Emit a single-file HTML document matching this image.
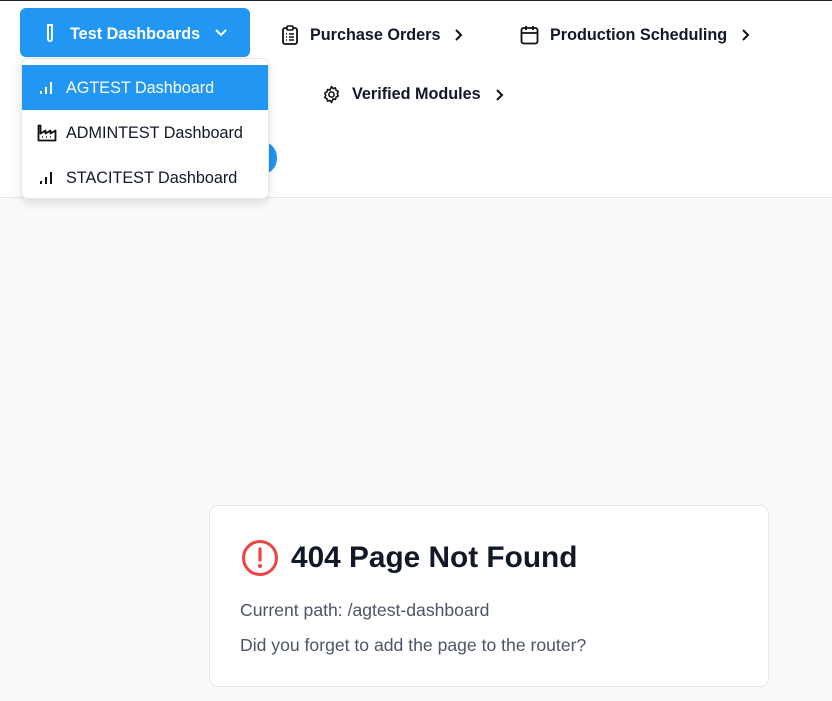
<!DOCTYPE html>
<html><head><meta charset="utf-8"><style>
*{margin:0;padding:0;box-sizing:border-box}
body{width:832px;height:701px;overflow:hidden;background:#f9fafb;font-family:"Liberation Sans",sans-serif;position:relative;color:#111827}
.hdr{position:absolute;left:0;top:0;width:832px;height:198px;background:#fff;border-top:1px solid #222;border-bottom:1px solid #e5e7eb}
.a{position:absolute;white-space:nowrap}
.nav{font-size:16.2px;font-weight:bold;color:#111827;display:flex;align-items:center}
.btn{left:20px;top:8px;width:230px;height:49px;background:#2196f3;border-radius:6px;color:#fff;font-size:16.2px;font-weight:bold;display:flex;align-items:center;padding-left:24px}
.dd{left:21px;top:58px;width:248px;height:141px;background:#fff;border:1px solid #e5e7eb;border-radius:7px;box-shadow:0 4px 10px rgba(0,0,0,.12);overflow:hidden;padding-top:6px}
.it{height:45px;display:flex;align-items:center;padding-left:15px;font-size:16.2px;color:#111827}
.it span{position:relative;top:1px}
.it svg{margin-right:11px}
.it.on{background:#2196f3;color:#fff}
.card{left:209px;top:505px;width:560px;height:182px;background:#fff;border:1px solid #e5e7eb;border-radius:9px}
</style></head><body>
<div class="hdr"></div>
<div class="a" style="left:244px;top:141px;width:33px;height:34px;border-radius:17px;background:#2196f3"></div>
<div class="a btn">
<svg width="12" height="20" viewBox="0 0 12 20" style="margin-right:14px"><path d="M3 2h6M4 2v14a2 2 0 0 0 4 0V2" fill="none" stroke="#fff" stroke-width="2"/></svg>
<span style="position:relative;top:2px">Test Dashboards</span>
<svg width="14" height="10" viewBox="0 0 14 10" style="margin-left:14px"><path d="M2 2l5 5 5-5" fill="none" stroke="#fff" stroke-width="2"/></svg>
</div>
<div class="a nav" style="left:281px;top:25px">
<svg width="18" height="20" viewBox="0 0 18 20" style="margin-right:11px"><rect x="2" y="3" width="14" height="16" rx="2" fill="none" stroke="#111" stroke-width="1.8"/><rect x="6" y="1" width="6" height="4" rx="1" fill="#fff" stroke="#111" stroke-width="1.6"/><path d="M5 9h1M8 9h5M5 12h1M8 12h5M5 15h1M8 15h5" stroke="#111" stroke-width="1.6"/></svg>
Purchase Orders
<svg width="10" height="14" viewBox="0 0 10 14" style="margin-left:14px"><path d="M2 2l5 5-5 5" fill="none" stroke="#111" stroke-width="2"/></svg>
</div>
<div class="a nav" style="left:520px;top:25px">
<svg width="19" height="20" viewBox="0 0 19 20" style="margin-right:11px"><rect x="1.5" y="3" width="16" height="15.5" rx="2" fill="none" stroke="#111" stroke-width="1.8"/><path d="M1.5 8h16M6 1v4M13 1v4" stroke="#111" stroke-width="1.8"/></svg>
Production Scheduling
<svg width="10" height="14" viewBox="0 0 10 14" style="margin-left:14px"><path d="M2 2l5 5-5 5" fill="none" stroke="#111" stroke-width="2"/></svg>
</div>
<div class="a nav" style="left:322px;top:85px">
<svg width="19" height="19" viewBox="0 0 24 24" style="margin-right:11px"><path d="M12 2l2 2.5 3-.8.8 3 2.7 1.5-1.2 2.8 1.2 2.8-2.7 1.5-.8 3-3-.8L12 22l-2-2.5-3 .8-.8-3L3.5 15.8l1.2-2.8-1.2-2.8L6.2 8.7l.8-3 3 .8z" fill="none" stroke="#111" stroke-width="2" stroke-linejoin="round"/><circle cx="12" cy="12" r="3.3" fill="none" stroke="#111" stroke-width="2"/></svg>
Verified Modules
<svg width="10" height="14" viewBox="0 0 10 14" style="margin-left:14px"><path d="M2 2l5 5-5 5" fill="none" stroke="#111" stroke-width="2"/></svg>
</div>
<div class="a dd">
<div class="it on"><svg width="18" height="16" viewBox="0 0 18 16"><path d="M4 14v-3M9 14V7M14 14V2" stroke="#fff" stroke-width="2"/></svg><span>AGTEST Dashboard</span></div>
<div class="it"><svg width="20" height="18" viewBox="0 0 20 18" style="margin-right:9px"><path d="M1.5 1.5v15h17v-10l-5 3v-3l-5 3v-3l-5 3v-8z" fill="none" stroke="#111" stroke-width="1.8" stroke-linejoin="round"/><path d="M5 13h1M9 13h1M13 13h1" stroke="#111" stroke-width="1.6"/></svg><span>ADMINTEST Dashboard</span></div>
<div class="it"><svg width="18" height="16" viewBox="0 0 18 16"><path d="M4 14v-3M9 14V7M14 14V2" stroke="#111" stroke-width="2"/></svg><span>STACITEST Dashboard</span></div>
</div>
<div class="card a">
<div class="a" style="left:31px;top:33px;display:flex;align-items:center">
<svg width="38" height="38" viewBox="0 0 38 38" style="margin-right:12px"><circle cx="19" cy="19" r="16.5" fill="none" stroke="#ef4444" stroke-width="3"/><path d="M19 10v11" stroke="#ef4444" stroke-width="3.2" stroke-linecap="round"/><circle cx="19" cy="27" r="2" fill="#ef4444"/></svg>
<span style="font-size:29.8px;font-weight:bold;color:#111827">404 Page Not Found</span></div>
<div class="a" style="left:30px;top:94px;font-size:17.6px;color:#4b5563">Current path: /agtest-dashboard</div>
<div class="a" style="left:30px;top:129px;font-size:17.6px;color:#4b5563">Did you forget to add the page to the router?</div>
</div>
</body></html>
